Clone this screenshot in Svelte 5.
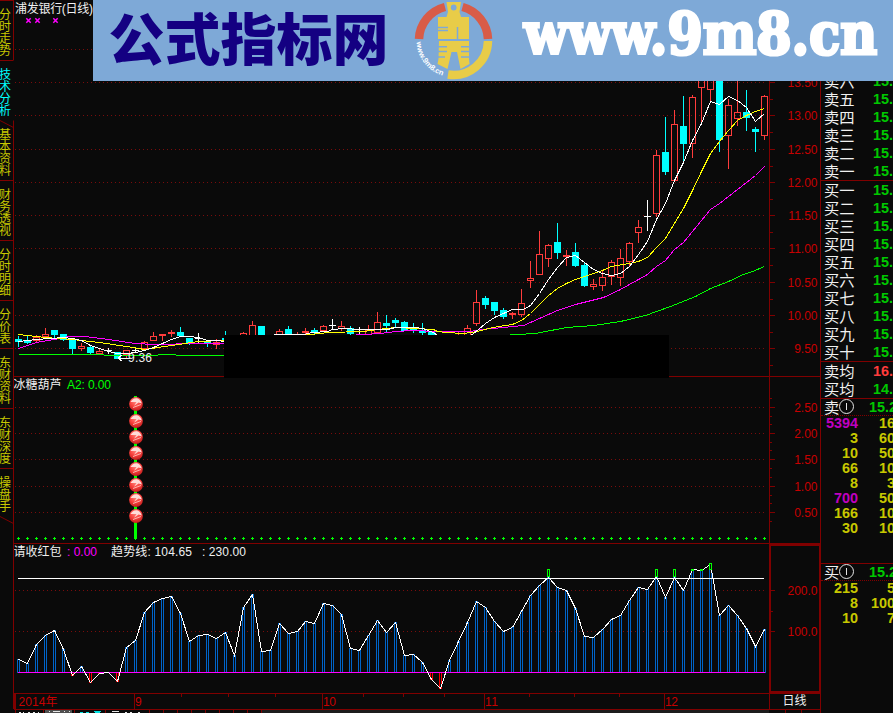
<script>
  const tabs = ['分时走势', '技术分析', '基本资料', '财务透视', '分时明细', '分价表', '东财资料', '东财深度', '操盘手'];
  const activeTab = '技术分析';

  // index, kind (u = up, d = down, x = doji), high, body top, body bottom, low
  const candles = [
    [0, 'd', 336, 339, 341, 346], [1, 'd', 335, 340, 342, 343], [2, 'u', 335, 337, 340, 342],
    [3, 'u', 328, 334, 336, 337], [4, 'd', 330, 330, 334, 337], [5, 'd', 334, 334, 339, 340],
    [6, 'd', 339, 339, 348, 353], [7, 'u', 343, 346, 348, 350], [8, 'd', 346, 347, 352, 353],
    [9, 'u', 349, 351, 353, 353], [10, 'x', 348, 350, 350, 353], [11, 'd', 352, 352, 358, 358],
    [12, 'u', 350, 350, 354, 357], [13, 'x', 348, 350, 350, 352], [14, 'u', 341, 342, 348, 350],
    [15, 'u', 332, 336, 340, 340], [16, 'u', 334, 334, 335, 340], [17, 'u', 330, 332, 333, 336],
    [18, 'd', 327, 332, 335, 335], [19, 'd', 338, 338, 342, 344], [20, 'x', 333, 338, 338, 342],
    [21, 'd', 341, 341, 343, 346], [22, 'u', 339, 342, 344, 348], [23, 'd', 331, 338, 341, 343],
    [25, 'u', 332, 333, 336, 336], [26, 'u', 321, 325, 337, 337], [27, 'd', 326, 326, 338, 338],
    [29, 'u', 329, 331, 337, 337], [30, 'd', 326, 329, 334, 334], [31, 'u', 332, 334, 337, 337],
    [32, 'u', 328, 331, 332, 334], [33, 'd', 328, 330, 332, 334], [34, 'u', 325, 326, 330, 331],
    [35, 'x', 319, 325, 325, 328], [36, 'u', 321, 326, 328, 330], [37, 'd', 326, 328, 333, 334],
    [38, 'x', 327, 334, 334, 336], [39, 'u', 325, 330, 335, 336], [40, 'u', 312, 322, 332, 332],
    [41, 'd', 315, 323, 325, 331], [42, 'd', 318, 320, 322, 326], [43, 'd', 321, 322, 330, 330],
    [44, 'd', 323, 328, 329, 332], [45, 'd', 323, 330, 332, 335], [46, 'd', 332, 332, 336, 336],
    [49, 'u', 332, 333, 333, 336], [50, 'u', 325, 328, 336, 336], [51, 'u', 290, 302, 323, 325],
    [52, 'd', 296, 298, 304, 308], [53, 'd', 302, 302, 310, 314], [54, 'd', 308, 310, 316, 318],
    [55, 'u', 312, 313, 314, 318], [56, 'u', 289, 303, 314, 316], [57, 'u', 261, 278, 280, 287],
    [58, 'u', 231, 254, 274, 274], [59, 'u', 244, 245, 258, 266], [60, 'd', 223, 242, 252, 258],
    [61, 'u', 250, 255, 256, 265], [62, 'd', 243, 252, 265, 266], [63, 'd', 262, 265, 285, 286],
    [64, 'u', 279, 284, 286, 289], [65, 'u', 271, 277, 285, 290], [66, 'u', 260, 262, 276, 284],
    [67, 'u', 249, 258, 277, 285], [68, 'u', 242, 243, 261, 265], [69, 'u', 220, 227, 232, 242],
    [70, 'x', 200, 216, 216, 230], [71, 'u', 150, 155, 213, 216], [72, 'd', 117, 152, 171, 174],
    [73, 'u', 110, 124, 180, 180], [74, 'd', 96, 126, 143, 161], [75, 'u', 95, 97, 143, 157],
    [76, 'u', 70, 70, 87, 123], [77, 'u', 70, 70, 89, 101], [78, 'd', 70, 70, 139, 151],
    [79, 'u', 99, 105, 135, 168], [80, 'u', 80, 112, 118, 125], [81, 'd', 90, 112, 117, 130],
    [82, 'd', 127, 129, 131, 151], [83, 'u', 95, 96, 135, 139],
  ];

  const averages = [
    { name: 'green', points: '18,354 90,354 117,355 157,355 158,354 175,354 176,355 224,355 400,342 517,334 535,333 566,327 593,325 620,321 645,315 670,306 695,296 710,288 728,281 743,274 752,271 764,266' },
    { name: 'magenta', points: '18,348 36,342 54,339 68,336 84,336 108,339 135,343 153,344 198,343 224,343 300,338 363,334 380,333 395,331 413,330 435,331 470,331 480,329 503,327 523,325 539,318 557,310 575,304 603,297 620,289 647,274 656,266 665,260 674,249 683,242 710,209 719,203 755,175 764,166' },
    { name: 'yellow', points: '18,334 45,337 72,339 99,342 126,346 144,349 171,345 198,341 224,340 310,334 328,332 363,331 377,329 395,327 415,328 433,329 437,331 445,332 463,333 477,331 492,327 512,324 521,320 530,313 539,304 548,295 557,288 566,283 575,279 593,273 602,270 611,266 629,263 638,261 647,257 656,247 665,238 674,223 683,208 692,190 701,171 710,153 719,141 728,130 737,120 746,115 755,111 764,108' },
    { name: 'white', points: '18,341 36,339 63,337 72,338 81,340 90,345 99,348 108,351 117,353 126,353 135,352 144,350 153,347 162,343 171,339 180,336 189,336 198,337 207,340 216,340 224,341 277,334 303,334 312,332 327,331 332,329 343,328 359,329 387,329 395,327 415,327 422,328 433,332 437,335 455,340 472,334 485,323 494,317 503,313 512,309 523,309 530,305 539,293 548,279 557,267 566,257 575,255 584,262 593,269 602,273 611,275 620,273 629,266 638,254 647,241 656,219 665,203 674,180 683,162 692,140 701,123 710,101 719,104 728,96 737,100 746,107 755,121 764,113' },
  ];

  const trend = [
    659, 663, 644, 635, 630, 649, 675, 666, 682, 673, 672, 681, 647, 640, 612, 602, 598, 596, 613, 641, 635,
    634, 638, 632, 655, 607, 594, 651, 650, 623, 633, 631, 621, 623, 603, 605, 614, 648, 650, 635, 620, 632,
    622, 655, 654, 662, 679, 688, 660, 641, 622, 601, 607, 621, 631, 627, 611, 595, 585, 577, 587, 590, 608,
    636, 637, 629, 619, 615, 600, 587, 589, 576, 597, 577, 590, 569, 570, 564, 615, 605, 615, 628, 646, 629,
  ];
  const zeroY = 672;

  const signals = [[59, 569, 7], [71, 569, 7], [73, 569, 7], [75, 569, 1], [76, 569, 1], [77, 563, 6]];
  const beads = [404, 421, 437, 453, 469, 485, 500, 516];

  const priceScale = [
    [49, ''], [82, '13.50'], [115, '13.00'], [149, '12.50'], [182, '12.00'],
    [215, '11.50'], [248, '11.00'], [282, '10.50'], [315, '10.00'], [348, '9.50'],
  ];
  const beadScale = [[407, '2.50'], [433, '2.00'], [459, '1.50'], [486, '1.00'], [512, '0.50']];
  const trendScale = [[590, '200.0'], [631, '100.0']];

  const months = [[134, '9', 7], [322, '10', 13], [484, '11', 13], [664, '12', 13]];
  const weekTicks = [181, 228, 275, 363, 403, 444, 529, 574, 619];

  const sells = ['六', '五', '四', '三', '二', '一'];
  const buys = ['一', '二', '三', '四', '五', '六', '七', '八', '九', '十'];
  const sellQueue = [
    ['5394', '16', true], ['3', '60'], ['10', '50'], ['66', '10'],
    ['8', '3'], ['700', '50', true], ['166', '10'], ['30', '10'],
  ];
  const buyQueue = [['215', '5'], ['8', '100'], ['10', '7']];

  const xOf = (i) => (i < 32 ? 18 : 17) + i * 9;
  const trendPoints = trend.map((y, i) => `${xOf(i) + 0.5},${y + 0.5}`).join(' ');
</script>

<div class="terminal">
  <div class="workspace">
    <nav class="tabs">
      {#each tabs as tab, i}
        <button class="tab" class:active={tab === activeTab} class:after={i === 2}>
          {#each tab as char}<span>{char}</span>{/each}
          {#if i === 2 || i === 8}
            <svg class="slant" class:bottom={i === 8} width="14" height="8" viewBox="0 0 14 8">
              <path d="M0 0.5L13.5 7.5" />
            </svg>
          {/if}
        </button>
      {/each}
    </nav>

    <main class="charts">
      <svg class="panel" width="806" height="376" viewBox="14 0 806 376" shape-rendering="crispEdges">
        {#each priceScale as [y, label]}
          <path class="grid" d="M15 {y + 0.5}H767" />
          <path class="axis" d="M769 {y + 0.5}H775M769 {y + 17.5}H773" />
          {#if label}
            <text class="scale" x="817.5" y={y + 5} text-anchor="end">{label}</text>
          {/if}
        {/each}
        <path class="axis" d="M769.5 0V376" />
        <text class="title" x="15" y="13" textLength="78">浦发银行(日线)</text>
        {#each [28, 37, 55] as x}
          <path class="cross" shape-rendering="auto" d="M{x - 1.7} 18.3l4.4 4.400m0 -4.400l-4.4 4.400" />
        {/each}
        {#each candles as [i, kind, high, top, bottom, low]}
          {@const x = xOf(i)}
          {#if kind === 'u'}
            <path class="up" d="M{x + 0.5} {high}V{top}M{x + 0.5} {bottom + 1}V{low + 1}" />
            <rect class="up" x={x - 2.5} y={top + 0.5} width="6" height={bottom - top} />
          {:else if kind === 'd'}
            <rect class="down" {x} y={high} width="1" height={low - high + 1} />
            <rect class="down" x={x - 3} y={top} width="7" height={bottom - top + 1} />
          {:else}
            <path class="doji" d="M{x + 0.5} {high}V{low + 1}M{x - 3} {top + 0.5}H{x + 4}" />
          {/if}
        {/each}
        {#each averages as { name, points }}
          <polyline class="line {name}" {points} transform="translate(0.5 0.5)" />
        {/each}
        <path class="doji" d="M118 358.5H130M118.5 358L121.5 355M118.5 358L121.5 361" />
        <text class="label" x="128" y="362" textLength="24">9.36</text>
        <rect x="224" y="335" width="445" height="42" fill="#000" />
      </svg>

      <svg class="panel" width="806" height="167" viewBox="14 376 806 167" shape-rendering="crispEdges">
        <defs>
          <radialGradient id="bead" cx="0.45" cy="0.3" r="0.72">
            <stop offset="0" stop-color="#ff8a80" />
            <stop offset="0.5" stop-color="#fa4440" />
            <stop offset="1" stop-color="#c01c1c" />
          </radialGradient>
        </defs>
        <path class="axis" d="M14 376.5H820M769.5 376V543" />
        <rect x="224" y="376" width="445" height="2" fill="#000" />
        {#each beadScale as [y, label]}
          <path class="grid" d="M15 {y + 0.5}H767" />
          <path class="axis" d="M769 {y + 0.5}H775M769 {y - 8.5}H772M769 {y + 9.5}H772" />
          <text class="scale" x="817.5" y={y + 5} text-anchor="end">{label}</text>
        {/each}
        <text class="title" x="13.5" y="389" textLength="48">冰糖葫芦</text>
        <text class="title green" x="67" y="389" textLength="44">A2: 0.00</text>
        {#each trend as _, i}
          <path class="plus" d="M{xOf(i) - 1} 538.5h3m-1.5 -1.5v3" />
        {/each}
        <rect class="stick" x="134" y="396" width="3" height="143" />
        {#each beads as y}
          <g shape-rendering="auto">
            <circle cx="136" cy={y} r="6.9" fill="url(#bead)" />
            <path class="shine" d="M130.500 {y - 2}Q132.500 {y - 6} 137 {y - 5.8}Q141 {y - 4.5} 141.800 {y - 0.5}L138.500 {y - 1.5}L134 {y + 1.8}L136.500 {y - 2}Z" />
            <path class="glint" d="M133 {y + 3.5}L141 {y + 0.5}" />
          </g>
        {/each}
      </svg>

      <svg class="panel" width="806" height="150" viewBox="14 543 806 150" shape-rendering="crispEdges">
        <path class="axis" d="M14 543.5H820" />
        {#each trendScale as [y, label]}
          <path class="grid" d="M15 {y + 0.5}H767" />
          <path class="axis" d="M769 {y + 0.5}H775" />
          <text class="scale" x="817.5" y={y + 5} text-anchor="end">{label}</text>
        {/each}
        <path class="axis" d="M769 611.5H773" />
        <rect class="selected" x="770" y="545" width="49.5" height="147" />
        <text class="title" x="13.5" y="556" textLength="48">请收红包</text>
        <text class="title magenta" x="67" y="556" textLength="30">: 0.00</text>
        <text class="title" x="111" y="556" textLength="81">趋势线: 104.65</text>
        <text class="title" x="202" y="556" textLength="44">: 230.00</text>
        {#each trend as y, i}
          {#if y < zeroY}
            <rect class="bar" x={xOf(i) - 0.5} y={Math.max(y, 569) + 0.5} width="2" height={zeroY - Math.max(y, 569)} />
          {:else if y > zeroY}
            <rect class="bar negative" x={xOf(i) - 0.5} y={zeroY + 0.5} width="2" height={y - zeroY} />
          {/if}
        {/each}
        <path class="zero" d="M18 {zeroY + 0.5}H765" />
        <path class="doji" d="M18 578.5H764" />
        <polyline class="line white" points={trendPoints} />
        {#each signals as [i, y, height]}
          <rect class="signal" x={xOf(i) - 0.5} y={y + 0.5} width="2" {height} />
        {/each}
      </svg>

      <svg class="panel" width="806" height="16" viewBox="14 693 806 16" shape-rendering="crispEdges">
        <path class="axis" d="M14 693.5H820M769.5 693V709" />
        <path class="axis" d="M15 693V709" stroke-width="2" />
        <text class="scale" x="18.5" y="706" textLength="39">2014年</text>
        {#each months as [x, label, width]}
          <path class="axis" d="M{x + 0.5} 693V709" />
          <text class="scale" x={x + 1} y="706" textLength={width}>{label}</text>
        {/each}
        {#each weekTicks as x}
          <path class="axis" d="M{x + 0.5} 693V697" />
        {/each}
        <text class="title" x="794.5" y="705" text-anchor="middle">日线</text>
      </svg>
    </main>

    <aside class="quotes">
      <section>
        {#each sells as level}
          <div class="quote"><span class="side">卖{level}</span><b class="fall">15.</b></div>
        {/each}
      </section>
      <section>
        {#each buys as level}
          <div class="quote"><span class="side">买{level}</span><b class="fall">15.</b></div>
        {/each}
      </section>
      <section>
        <div class="quote"><span class="side">卖均</span><b class="rise">16.</b></div>
        <div class="quote"><span class="side">买均</span><b class="fall">14.</b></div>
      </section>
      <section class="queue sell">
        <div class="quote head"><span class="side">卖<i class="circled"></i></span><b class="fall">15.2</b></div>
        {#each sellQueue as [count, volume, big]}
          <div class="order"><b class:big>{count}</b><b>{volume}</b></div>
        {/each}
      </section>
      <section class="queue">
        <div class="quote head"><span class="side">买<i class="circled"></i></span><b class="fall">15.2</b></div>
        {#each buyQueue as [count, volume]}
          <div class="order"><b>{count}</b><b>{volume}</b></div>
        {/each}
      </section>
    </aside>
  </div>

  <footer>
    <svg width="893" height="4" viewBox="0 709 893 4" shape-rendering="crispEdges">
      <rect x="261" y="709" width="508" height="4" fill="#1c1c1c" />
      <rect x="45" y="710" width="27" height="3" fill="#505050" />
      <path class="axis" d="M14 709.5H820M15.5 709V713M43.5 709V713M74 709V713M105.5 709V713M785.5 709V713M801.5 709V713M820.5 709V713" />
      {#each [149, 163, 177, 191, 205, 219, 233, 247, 261] as x}
        <path class="axis" d="M{x + 0.5} 709V713" />
      {/each}
      <path class="mark" d="M19 712.5h2m2 0h1m4 0h2m3 0h2m3 0h1M49 711.5h1m3 0h7m4 0h1m4 0h1M112 711.5h7m6 1h2m3 0h2m6 0h2" />
      <path class="mark cyan" d="M80 712.5h3m3 0h3m5 -1h7m-6 1h5" />
    </svg>
  </footer>

  <header class="banner">
    <svg width="800" height="81" viewBox="93 0 800 81">
      <text class="brand" x="108.500" y="60" textLength="280" lengthAdjust="spacingAndGlyphs">公式指标网</text>
      <g class="logo">
        <path class="arc red" d="M419 39A34.5 34.5 0 0 1 445 7" />
        <path class="arc red" d="M462.500 7A34.5 34.5 0 0 1 488 39" />
        <path class="arc gold" d="M488 41A34.5 34.5 0 0 1 448 74.500" />
        <path class="coin" d="M446.500 2H461L459.500 12L461 17H469V39H438V17H446.500L448 12Z" />
        <path class="coin" d="M439 41H469V59L469.500 64L460.500 69L457 52H451.500L447.500 69L437.500 64L438.500 59Z" />
        <circle cx="453.700" cy="7.500" r="2.900" />
        <path class="cut" d="M438 27.500H448M438 30.500H448M457.500 27V39M438 46.800H447M438 51.500H447M461 51.500H469M438 57H445M461 57H469M461 46.800H469" />
        <path id="ring" d="M416.500 42A37 37 0 0 0 446 76.500" fill="none" />
        <text class="ring-text"><textPath href="#ring" textLength="45">www.9m8.cn</textPath></text>
      </g>
      <text class="site" x="524" y="54" textLength="353" lengthAdjust="spacingAndGlyphs">www.9m8.cn</text>
    </svg>
  </header>
</div>

<style>
  :global(body) {
    margin: 0;
    background: #0a0a0a;
  }

  .terminal {
    position: relative;
    width: 893px;
    height: 713px;
    overflow: hidden;
    background: #0a0a0a;
    font-family: 'Liberation Sans', 'Noto Sans CJK SC', sans-serif;
  }

  .workspace {
    display: flex;
    height: 709px;
  }

  svg {
    display: block;
  }

  .tabs {
    display: flex;
    flex-direction: column;
    width: 14px;
    flex: none;
  }

  .tabs::after {
    content: '';
    flex: 1;
    border-right: 1px solid #800000;
  }

  .tab {
    position: relative;
    display: flex;
    flex-direction: column;
    box-sizing: border-box;
    width: 14px;
    margin: 0;
    padding: 7px 0 5px;
    border: 0 solid #800000;
    border-width: 1px 1px 0 0;
    background: none;
    color: #c8c800;
    font: 12px/12px 'Noto Sans CJK SC', sans-serif;
    text-align: left;
  }

  .tab span {
    width: 12px;
    height: 12px;
    margin-left: -1px;
  }

  .tab span:last-of-type {
    margin-bottom: -1px;
  }

  .tab.active {
    border-right-color: transparent;
    color: #00ffff;
  }

  .tab.after {
    border-top-color: transparent;
  }

  .slant {
    position: absolute;
    top: -1px;
    left: 0;
  }

  .slant.bottom {
    top: auto;
    bottom: -8px;
  }

  .slant path,
  .axis {
    fill: none;
    stroke: #800000;
  }

  .charts {
    width: 806px;
    flex: none;
  }

  .grid {
    stroke: #7a0c0c;
    stroke-dasharray: 1 3;
  }

  .scale {
    fill: #c80000;
    font-size: 12px;
  }

  .title,
  .label {
    fill: #f0f0f0;
    font-size: 12px;
  }

  .title.green {
    fill: #00ff00;
  }

  .title.magenta {
    fill: #ff00ff;
  }

  .cross {
    fill: none;
    stroke: #ff00ff;
    stroke-width: 1.5;
  }

  .up {
    fill: none;
    stroke: #ff3c3c;
  }

  .down {
    fill: #00ffff;
  }

  .doji {
    fill: none;
    stroke: #ffffff;
  }

  .line {
    fill: none;
    stroke-width: 1;
  }

  .line.white {
    stroke: #ffffff;
  }

  .line.yellow {
    stroke: #ffff00;
  }

  .line.magenta {
    stroke: #ff00ff;
  }

  .line.green {
    stroke: #00ff00;
  }

  .plus {
    fill: none;
    stroke: #00ff00;
  }

  .stick {
    fill: #00ff00;
  }

  .shine {
    fill: #ffe8e4;
    opacity: 0.9;
  }

  .glint {
    stroke: #ffb4ac;
    stroke-width: 1;
  }

  .selected {
    fill: none;
    stroke: #800000;
    stroke-width: 2;
  }

  .zero {
    stroke: #ff00ff;
  }

  .bar {
    fill: #0a0a0a;
    stroke: #0064c8;
  }

  .bar.negative {
    stroke: #ff0000;
  }

  .signal {
    fill: #0a0a0a;
    stroke: #00ff00;
  }

  .quotes {
    box-sizing: border-box;
    width: 73px;
    padding-top: 72px;
    border-left: 1px solid #800000;
    overflow: hidden;
  }

  .quotes section + section {
    border-top: 1px solid #800000;
  }

  .quote {
    display: flex;
    align-items: center;
    height: 18px;
    padding-left: 3px;
    white-space: nowrap;
  }

  .side {
    display: flex;
    align-items: center;
    width: 49px;
    flex: none;
    margin-top: -2px;
    color: #f0f0f0;
    font: 15.3px/18px 'Noto Sans CJK SC', sans-serif;
  }

  .quote b,
  .order b {
    font-size: 14.4px;
    line-height: 15px;
  }

  .fall {
    color: #00c800;
  }

  .rise {
    color: #ff3c3c;
  }

  .head {
    box-sizing: border-box;
    height: 17px;
    border-bottom: 1px dotted #800000;
  }

  .head .side {
    width: 45px;
  }

  .circled {
    display: flex;
    align-items: center;
    justify-content: center;
    box-sizing: border-box;
    width: 15px;
    height: 15px;
    flex: none;
    border: 1px solid #e6e6e6;
    border-radius: 50%;
  }

  .circled::before {
    content: '';
    width: 1px;
    height: 7px;
    background: #e6e6e6;
  }

  .queue.sell {
    height: 164px;
  }

  .order {
    display: flex;
    height: 15px;
    color: #c8c800;
  }

  .order b {
    width: 37px;
    flex: none;
    text-align: right;
  }

  .order .big {
    color: #c000c0;
  }

  .mark {
    fill: none;
    stroke: #e6e6e6;
  }

  .mark.cyan {
    stroke: #00e0e0;
  }

  .banner {
    position: absolute;
    top: 0;
    left: 93px;
    width: 800px;
    height: 81px;
    background: #7ea9d7;
  }

  .brand {
    fill: #140082;
    font: 900 56px 'Noto Sans CJK SC', sans-serif;
  }

  .site {
    fill: #ffffff;
    stroke: #ffffff;
    stroke-width: 3.2;
    font: bold 57px 'DejaVu Serif', serif;
  }

  .arc {
    fill: none;
    stroke-width: 8.5;
  }

  .arc.red {
    stroke: #d85c48;
  }

  .arc.gold {
    stroke: #e8cc48;
  }

  .coin {
    fill: #e8cc48;
  }

  .logo circle {
    fill: #7ea9d7;
  }

  .cut {
    fill: none;
    stroke: #7ea9d7;
    stroke-width: 1.5;
  }

  .ring-text {
    fill: #ffffff;
    font: bold 7.5px 'Liberation Sans', sans-serif;
  }
</style>
